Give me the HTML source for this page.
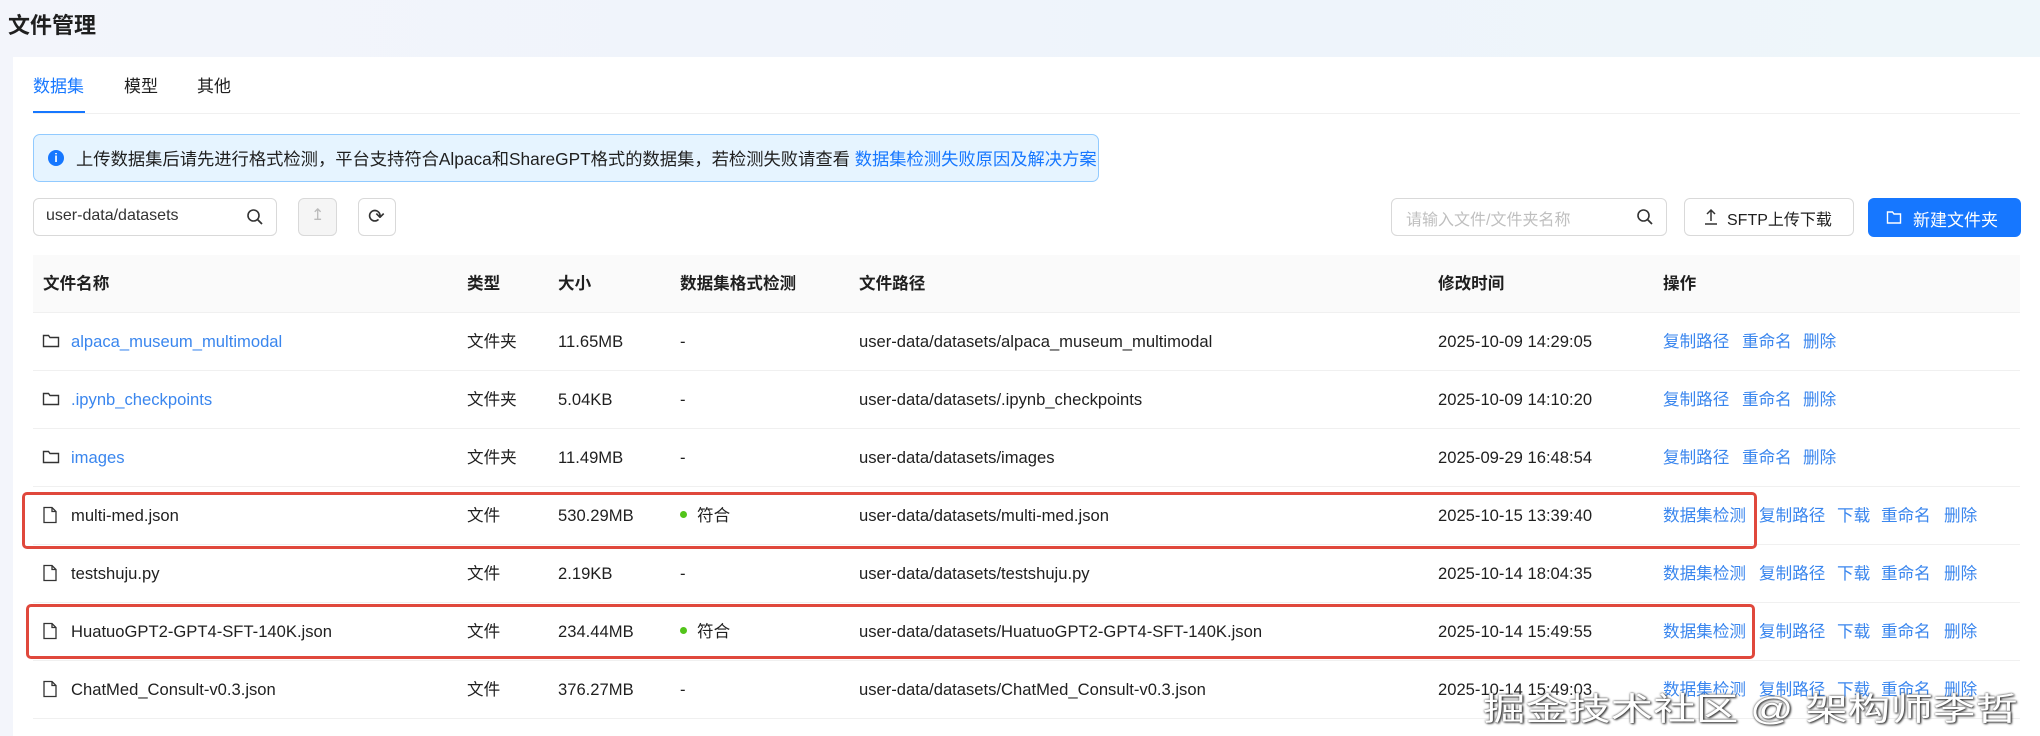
<!DOCTYPE html>
<html><head><meta charset="utf-8"><style>
*{margin:0;padding:0;box-sizing:border-box}
body{width:2040px;height:736px;overflow:hidden;background:linear-gradient(90deg,#f3f5fb,#eef4fb 60%,#eef6fa);font-family:"Liberation Sans","Noto Sans CJK SC",sans-serif;color:#1f1f1f;position:relative;font-size:16.6px}
.a{position:absolute;white-space:nowrap}
.card{position:absolute;left:13px;top:57px;width:2027px;height:679px;background:#fff}
.blue{color:#1677ff}
.lnk{color:#3a86ee}
.btn{position:absolute;border:1px solid #d9d9d9;border-radius:6px;background:#fff}
.row{position:absolute;left:33px;width:1987px;height:58px;border-bottom:1px solid #f0f0f0}
.cell{position:absolute;top:0;line-height:58px;white-space:nowrap}
.hd{font-weight:bold}
.red{position:absolute;border:3px solid #e0483c;border-radius:5px}
.dot{display:inline-block;width:7px;height:7px;border-radius:50%;background:#52c41a;margin-right:10px;vertical-align:middle;position:relative;top:-2px}
</style></head><body>
<div class="a" style="left:8px;top:8px;font-size:22px;font-weight:bold">文件管理</div>
<div class="card"></div>
<div class="a blue" style="left:33px;top:72px;font-size:17px">数据集</div>
<div class="a" style="left:124px;top:72px;font-size:17px">模型</div>
<div class="a" style="left:197px;top:72px;font-size:17px">其他</div>
<div class="a" style="left:33px;top:111px;width:52px;height:3px;background:#1677ff"></div>
<div class="a" style="left:33px;top:113px;width:1987px;height:1px;background:#f0f0f0"></div>
<div class="a" style="left:33px;top:134px;width:1066px;height:48px;background:#e6f4ff;border:1px solid #91caff;border-radius:7px"></div>
<div class="a" style="left:48px;top:150px;width:16px;height:16px;border-radius:50%;background:#1677ff;color:#fff;font-size:12px;font-weight:bold;text-align:center;line-height:16px">i</div>
<div class="a" style="left:76px;top:145px;font-size:17.3px">上传数据集后请先进行格式检测，平台支持符合Alpaca和ShareGPT格式的数据集，若检测失败请查看 <span class="blue">数据集检测失败原因及解决方案</span></div>
<div class="btn" style="left:33px;top:198px;width:244px;height:38px"></div>
<div class="a" style="left:46px;top:207px;font-size:16px;color:#333">user-data/datasets</div>
<svg class="a" style="left:246px;top:208px" width="18" height="18" viewBox="0 0 18 18"><circle cx="7.5" cy="7.5" r="5.5" fill="none" stroke="#333" stroke-width="1.6"/><line x1="11.5" y1="11.5" x2="16" y2="16" stroke="#333" stroke-width="1.8"/></svg>
<div class="btn" style="left:298px;top:198px;width:39px;height:38px;background:#f5f5f5"></div>
<div class="a" style="left:311px;top:205px;color:#bbb;font-size:16px">↥</div>
<div class="btn" style="left:358px;top:198px;width:38px;height:38px"></div>
<div class="a" style="left:368px;top:204px;color:#333;font-size:20px">⟳</div>
<div class="btn" style="left:1391px;top:198px;width:276px;height:38px"></div>
<div class="a" style="left:1406px;top:206px;color:#bfbfbf;font-size:16px">请输入文件/文件夹名称</div>
<svg class="a" style="left:1636px;top:208px" width="18" height="18" viewBox="0 0 18 18"><circle cx="7.5" cy="7.5" r="5.5" fill="none" stroke="#333" stroke-width="1.6"/><line x1="11.5" y1="11.5" x2="16" y2="16" stroke="#333" stroke-width="1.8"/></svg>
<div class="btn" style="left:1684px;top:198px;width:170px;height:38px"></div>
<svg class="a" style="left:1703px;top:208px" width="16" height="18" viewBox="0 0 16 18"><path d="M8 2v11M4 6l4-4 4 4M2 16h12" fill="none" stroke="#333" stroke-width="1.5"/></svg>
<div class="a" style="left:1727px;top:206px;font-size:16px">SFTP上传下载</div>
<div class="a" style="left:1868px;top:198px;width:153px;height:39px;background:#1677ff;border-radius:6px"></div>
<svg class="a" style="left:1886px;top:209px" width="16" height="16" viewBox="0 0 16 16"><path d="M1.5 3h5l1.5 2h6.5v9h-13z" fill="none" stroke="#fff" stroke-width="1.4"/></svg>
<div class="a" style="left:1913px;top:206px;font-size:17px;color:#fff">新建文件夹</div>
<div class="a" style="left:33px;top:255px;width:1987px;height:58px;background:#fafafa;border-bottom:1px solid #f0f0f0"></div>
<div class="row" style="top:255px;border:none">
<div class="cell hd" style="left:10px">文件名称</div>
<div class="cell hd" style="left:434px">类型</div>
<div class="cell hd" style="left:525px">大小</div>
<div class="cell hd" style="left:647px">数据集格式检测</div>
<div class="cell hd" style="left:826px">文件路径</div>
<div class="cell hd" style="left:1405px">修改时间</div>
<div class="cell hd" style="left:1630px">操作</div>
</div>
<div id="rows"></div>
<script>
var folder='<svg width="18" height="16" viewBox="0 0 18 16" style="vertical-align:middle;margin-right:11px;position:relative;top:-2px"><path d="M1.5 2.5h5l1.5 2h8.5v9h-15z" fill="none" stroke="#333" stroke-width="1.4"/></svg>';
var file='<svg width="16" height="18" viewBox="0 0 16 18" style="vertical-align:middle;margin-right:13px;position:relative;top:-2px"><path d="M2 1.5h8l4 4v11H2z M10 1.5v4h4" fill="none" stroke="#333" stroke-width="1.3"/></svg>';
var d=[
['alpaca_museum_multimodal','文件夹','11.65MB','-','2025-10-09 14:29:05',0],
['.ipynb_checkpoints','文件夹','5.04KB','-','2025-10-09 14:10:20',0],
['images','文件夹','11.49MB','-','2025-09-29 16:48:54',0],
['multi-med.json','文件','530.29MB','ok','2025-10-15 13:39:40',1],
['testshuju.py','文件','2.19KB','-','2025-10-14 18:04:35',1],
['HuatuoGPT2-GPT4-SFT-140K.json','文件','234.44MB','ok','2025-10-14 15:49:55',1],
['ChatMed_Consult-v0.3.json','文件','376.27MB','-','2025-10-14 15:49:03',1]];
var h='';
d.forEach(function(r,i){
var top=313+i*58;
var name=r[5]?file+r[0]:folder+'<span class="lnk">'+r[0]+'</span>';
var ck=r[3]=='ok'?'<span class="dot"></span>符合':'-';
var ops=r[5]?
'<div class="cell lnk" style="left:1630px">数据集检测</div><div class="cell lnk" style="left:1726px">复制路径</div><div class="cell lnk" style="left:1804px">下载</div><div class="cell lnk" style="left:1848px">重命名</div><div class="cell lnk" style="left:1911px">删除</div>'
:'<div class="cell lnk" style="left:1630px">复制路径</div><div class="cell lnk" style="left:1709px">重命名</div><div class="cell lnk" style="left:1770px">删除</div>';
h+='<div class="row" style="top:'+top+'px"><div class="cell" style="left:9px">'+name+'</div><div class="cell" style="left:434px">'+r[1]+'</div><div class="cell" style="left:525px">'+r[2]+'</div><div class="cell" style="left:647px">'+ck+'</div><div class="cell" style="left:826px">user-data/datasets/'+r[0]+'</div><div class="cell" style="left:1405px">'+r[4]+'</div>'+ops+'</div>';
});
document.getElementById('rows').innerHTML=h;
</script>
<div class="red" style="left:22px;top:492px;width:1735px;height:57px"></div>
<div class="red" style="left:26px;top:604px;width:1729px;height:55px"></div>
<div class="a" style="left:1483px;top:684px;font-size:32px;color:#fff;text-shadow:0 0 2px #333,1px 1px 2px #333;transform:scaleX(1.33);transform-origin:left top">掘金技术社区 @ 架构师李哲</div>
</body></html>
